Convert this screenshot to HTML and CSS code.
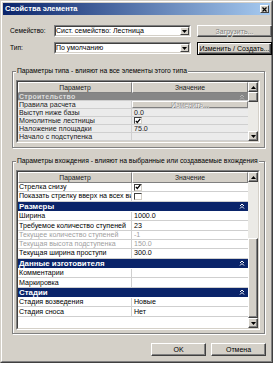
FILE: index.html
```html
<!DOCTYPE html>
<html lang="ru">
<head>
<meta charset="utf-8">
<title>Свойства элемента</title>
<link rel="stylesheet" href="styles.css">
</head>
<body>
<div class="dialog">
  <div class="frame">
    <div class="titlebar">
      <span class="title">Свойства элемента</span>
      <span class="close"><svg width="5" height="5" viewBox="0 0 5 5"><path d="M0.5 0.5L4.5 4.5M4.5 0.5L0.5 4.5" stroke="#000" stroke-width="1.2"/></svg></span>
    </div>
    <div class="content">
      <div class="fields">
        <span class="label">Семейство:</span>
        <div class="combo"><div class="combo-in"><span class="combo-text">Сист. семейство: Лестница</span><span class="drop"><svg width="5" height="3" viewBox="0 0 5 3"><path d="M0 0H5L2.5 3Z" fill="#000"/></svg></span></div></div>
        <span class="btn disabled">Загрузить...</span>
        <span class="label">Тип:</span>
        <div class="combo"><div class="combo-in"><span class="combo-text">По умолчанию</span><span class="drop"><svg width="5" height="3" viewBox="0 0 5 3"><path d="M0 0H5L2.5 3Z" fill="#000"/></svg></span></div></div>
        <span class="btn default">Изменить / Создать...</span>
      </div>

      <fieldset class="group g1">
        <legend>Параметры типа - влияют на все элементы этого типа</legend>
        <div class="grid">
          <div class="grid-in t1">
            <div class="rows">
              <div class="hdr"><span class="hc">Параметр</span><span class="hc">Значение</span></div>
              <div class="cat dim"><span>Строительство</span><svg width="6" height="6" viewBox="0 0 6 6"><path d="M1 3L3 1L5 3M1 5.5L3 3.5L5 5.5" stroke="#b4b4b4" fill="none"/></svg></div>
              <div class="row"><span class="p">Правила расчета</span><span class="v"><span class="cellbtn">Изменить...</span></span></div>
              <div class="row"><span class="p">Выступ ниже базы</span><span class="v">0.0</span></div>
              <div class="row"><span class="p">Монолитные лестницы</span><span class="v"><span class="chk"><svg width="6" height="6" viewBox="0 0 6 6"><path d="M0.8 2.8L2.3 4.5L5.3 0.8" stroke="#000" stroke-width="1.2" fill="none"/></svg></span></span></div>
              <div class="row"><span class="p">Наложение площадки</span><span class="v">75.0</span></div>
              <div class="row cut"><span class="p">Начало с подступенка</span><span class="v"></span></div>
            </div>
            <div class="scroll">
              <span class="sbtn"><svg width="5" height="3" viewBox="0 0 5 3"><path d="M0 3H5L2.5 0Z" fill="#000"/></svg></span>
              <span class="track"><span class="thumb t1thumb"></span></span>
              <span class="sbtn"><svg width="5" height="3" viewBox="0 0 5 3"><path d="M0 0H5L2.5 3Z" fill="#000"/></svg></span>
            </div>
          </div>
        </div>
      </fieldset>

      <fieldset class="group g2">
        <legend>Параметры вхождения - влияют на выбранные или создаваемые вхождения</legend>
        <div class="grid">
          <div class="grid-in t2">
            <div class="rows">
              <div class="hdr"><span class="hc">Параметр</span><span class="hc">Значение</span></div>
              <div class="row"><span class="p">Стрелка снизу</span><span class="v"><span class="chk"><svg width="6" height="6" viewBox="0 0 6 6"><path d="M0.8 2.8L2.3 4.5L5.3 0.8" stroke="#000" stroke-width="1.2" fill="none"/></svg></span></span></div>
              <div class="row"><span class="p">Показать стрелку вверх на всех ви</span><span class="v"><span class="chk"></span></span></div>
              <div class="cat navy"><span>Размеры</span><svg width="6" height="6" viewBox="0 0 6 6"><path d="M1 3L3 1L5 3M1 5.5L3 3.5L5 5.5" stroke="#fff" fill="none"/></svg></div>
              <div class="row"><span class="p">Ширина</span><span class="v">1000.0</span></div>
              <div class="row"><span class="p">Требуемое количество ступеней</span><span class="v">23</span></div>
              <div class="row off"><span class="p">Текущее количество ступеней</span><span class="v">-1</span></div>
              <div class="row off"><span class="p">Текущая высота подступенка</span><span class="v">150.0</span></div>
              <div class="row"><span class="p">Текущая ширина проступи</span><span class="v">300.0</span></div>
              <div class="cat navy"><span>Данные изготовителя</span><svg width="6" height="6" viewBox="0 0 6 6"><path d="M1 3L3 1L5 3M1 5.5L3 3.5L5 5.5" stroke="#fff" fill="none"/></svg></div>
              <div class="row"><span class="p">Комментарии</span><span class="v"></span></div>
              <div class="row"><span class="p">Маркировка</span><span class="v"></span></div>
              <div class="cat navy"><span>Стадии</span><svg width="6" height="6" viewBox="0 0 6 6"><path d="M1 3L3 1L5 3M1 5.5L3 3.5L5 5.5" stroke="#fff" fill="none"/></svg></div>
              <div class="row"><span class="p">Стадия возведения</span><span class="v">Новые</span></div>
              <div class="row"><span class="p">Стадия сноса</span><span class="v">Нет</span></div>
            </div>
            <div class="scroll">
              <span class="sbtn"><svg width="5" height="3" viewBox="0 0 5 3"><path d="M0 3H5L2.5 0Z" fill="#000"/></svg></span>
              <span class="track"><span class="thumb t2thumb"></span></span>
              <span class="sbtn"><svg width="5" height="3" viewBox="0 0 5 3"><path d="M0 0H5L2.5 3Z" fill="#000"/></svg></span>
            </div>
          </div>
        </div>
      </fieldset>

      <div class="actions">
        <span class="btn act">OK</span>
        <span class="btn act">Отмена</span>
      </div>
    </div>
  </div>
</div>
</body>
</html>
```

FILE: styles.css
```css
* { box-sizing: border-box; }
html, body { margin: 0; padding: 0; background: #fff; }
body {
  font-family: "Liberation Sans", Arial, sans-serif;
  font-size: 7px;
  color: #000;
}
.dialog {
  width: 273px;
  height: 363px;
  border: 1px solid;
  border-color: #d4d0c8 #404040 #404040 #d4d0c8;
  background: #d4d0c8;
}
.frame {
  height: 100%;
  border: 1px solid;
  border-color: #fff #808080 #808080 #fff;
  padding: 1px;
  display: flex;
  flex-direction: column;
}
.titlebar {
  height: 12px;
  flex: none;
  display: flex;
  align-items: center;
  justify-content: space-between;
  padding: 0 1px 0 2px;
  background: linear-gradient(to right, #0a246a, #a6caf0);
}
.title {
  color: #fff;
  font-weight: bold;
  font-size: 7.5px;
  line-height: 12px;
}
.close {
  width: 9px;
  height: 8px;
  background: #d4d0c8;
  border: 1px solid;
  border-color: #fff #404040 #404040 #fff;
  display: flex;
  align-items: center;
  justify-content: center;
}
.close svg { display: block; }
.content {
  flex: 1;
  display: flex;
  flex-direction: column;
  padding: 10px 4px 0 7px;
}
.fields {
  display: grid;
  grid-template-columns: 38px 137px 75px;
  column-gap: 6px;
  row-gap: 5px;
  grid-auto-rows: 12px;
  align-items: center;
}
.label { line-height: 12px; white-space: nowrap; font-size: 6.6px; }
.combo {
  height: 12px;
  background: #fff;
  border: 1px solid;
  border-color: #808080 #fff #fff #808080;
  display: flex;
}
.combo-in {
  flex: 1;
  border: 1px solid;
  border-color: #404040 #d4d0c8 #d4d0c8 #404040;
  display: flex;
  align-items: stretch;
  min-width: 0;
}
.combo-text {
  flex: 1;
  line-height: 8px;
  white-space: nowrap;
  overflow: hidden;
}
.drop {
  width: 9px;
  flex: none;
  background: #d4d0c8;
  border: 1px solid;
  border-color: #fff #404040 #404040 #fff;
  display: flex;
  align-items: center;
  justify-content: center;
}
.drop svg, .sbtn svg { display: block; }
.btn {
  height: 12px;
  background: #d4d0c8;
  border: 1px solid;
  border-color: #fff #404040 #404040 #fff;
  box-shadow: inset -1px -1px 0 #808080;
  display: flex;
  align-items: center;
  justify-content: center;
  white-space: nowrap;
}
.btn.disabled {
  color: #808080;
  text-shadow: 0.6px 0.6px 0 #fff;
}
.btn.default {
  height: 13px;
  border-color: #000;
  box-shadow: inset 1px 1px 0 #fff, inset -1px -1px 0 #404040, inset -2px -2px 0 #808080;
}
.group {
  margin: 13px 1px 0 2px;
  padding: 5px 4px 4px 3px;
  border: 1px solid #808080;
  box-shadow: inset 1px 1px 0 #fff, 1px 1px 0 #fff;
  min-width: 0;
}
.group.g2 { margin-top: 9px; padding-bottom: 3px; }
.group legend {
  padding: 0 1px;
  margin: 0;
  line-height: 8px;
  font-size: 6.75px;
  background: #d4d0c8;
  white-space: nowrap;
}
.grid {
  border: 1px solid;
  border-color: #808080 #fff #fff #808080;
}
.grid-in {
  display: flex;
  border: 1px solid;
  border-color: #404040 #d4d0c8 #d4d0c8 #404040;
  overflow: hidden;
}
.t1 { height: 61px; }
.t2 { height: 158px; }
.rows {
  width: 230px;
  flex: none;
  display: flex;
  flex-direction: column;
  overflow: hidden;
  font-size: 7.1px;
}
.t1 .rows { background: #ebebeb; }
.t2 .rows { background: #fff; }
.hdr {
  height: 11px;
  flex: none;
  display: grid;
  grid-template-columns: 114px 116px;
  font-size: 6.8px;
}
.hc {
  background: #d4d0c8;
  border: 1px solid;
  border-color: #fff #808080 #808080 #fff;
  display: flex;
  align-items: center;
  justify-content: center;
  color: #222;
}
.row {
  flex: none;
  display: grid;
  grid-template-columns: 114px 116px;
  border-bottom: 1px solid #cfcfcf;
}
.t1 .row { height: 8px; }
.t2 .row { height: 9.3px; }
.p, .v {
  display: flex;
  align-items: center;
  white-space: nowrap;
  overflow: hidden;
  padding-left: 1px;
}
.p { border-right: 1px solid #cfcfcf; }
.v { padding-left: 2px; }
.t1 .p, .t1 .v { color: #202020; }
.row.off .p, .row.off .v { color: #a0a0a0; }
.cellbtn {
  margin-left: -2px;
  flex: 1;
  height: 100%;
  background: #d4d0c8;
  border: 1px solid;
  border-color: #fff #808080 #808080 #fff;
  display: flex;
  align-items: center;
  justify-content: center;
  color: #9a9a9a;
  text-shadow: 0.6px 0.6px 0 #fff;
}
.chk {
  width: 8px;
  height: 7px;
  background: #fff;
  border: 1px solid;
  border-color: #404040 #d4d0c8 #d4d0c8 #404040;
  display: flex;
  align-items: center;
  justify-content: center;
}
.chk svg { display: block; }
.cat {
  flex: none;
  display: flex;
  align-items: center;
  justify-content: space-between;
  padding: 0 3px 0 1px;
  font-weight: bold;
  white-space: nowrap;
}
.cat svg { display: block; }
.cat.dim {
  height: 8px;
  background: #868686;
  color: #dcdcdc;
  font-size: 7px;
  letter-spacing: 0.25px;
  border-bottom: 1px solid #cfcfcf;
}
.cat.navy {
  height: 10.5px;
  background: #0a246a;
  color: #fff;
  font-size: 7.9px;
  border-bottom: 1px solid #fff;
}
.scroll {
  width: 10px;
  flex: none;
  display: flex;
  flex-direction: column;
  background: #ebeae6;
}
.sbtn {
  height: 10px;
  flex: none;
  background: #d4d0c8;
  border: 1px solid;
  border-color: #fff #404040 #404040 #fff;
  box-shadow: inset -1px -1px 0 #808080;
  display: flex;
  align-items: center;
  justify-content: center;
}
.track {
  flex: 1;
  display: flex;
  flex-direction: column;
}
.thumb {
  flex: none;
  background: #d4d0c8;
  border: 1px solid;
  border-color: #fff #404040 #404040 #fff;
  box-shadow: inset -1px -1px 0 #808080;
}
.t1thumb { height: 10px; }
.t2thumb { height: 80px; margin-top: auto; }
.actions {
  display: flex;
  justify-content: flex-end;
  gap: 5px;
  margin-top: 9px;
}
.btn.act { width: 55px; height: 13px; }
```
